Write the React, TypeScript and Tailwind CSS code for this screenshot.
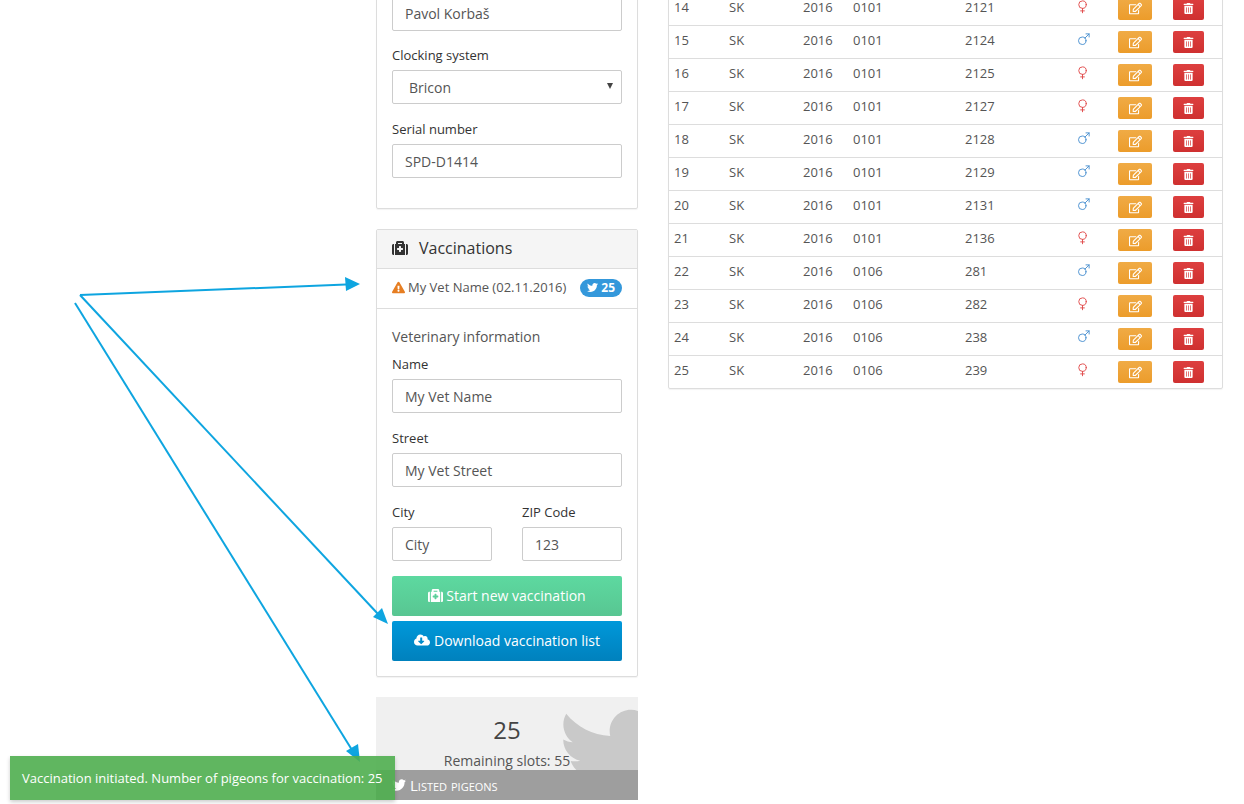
import React from 'react';
import { FaMedkit, FaTwitter, FaExclamationTriangle, FaCloudDownloadAlt, FaRegEdit, FaTrashAlt } from 'react-icons/fa';
import { Venus, Mars } from 'lucide-react';

type Row = [number, string, string, string, string, 'f' | 'm'];

const rows: Row[] = [
    [14, 'SK', '2016', '0101', '2121', 'f'],
    [15, 'SK', '2016', '0101', '2124', 'm'],
    [16, 'SK', '2016', '0101', '2125', 'f'],
    [17, 'SK', '2016', '0101', '2127', 'f'],
    [18, 'SK', '2016', '0101', '2128', 'm'],
    [19, 'SK', '2016', '0101', '2129', 'm'],
    [20, 'SK', '2016', '0101', '2131', 'm'],
    [21, 'SK', '2016', '0101', '2136', 'f'],
    [22, 'SK', '2016', '0106', '281', 'm'],
    [23, 'SK', '2016', '0106', '282', 'f'],
    [24, 'SK', '2016', '0106', '238', 'm'],
    [25, 'SK', '2016', '0106', '239', 'f'],
];

const Field = ({ label, value, className = '' }: { label: string; value: string; className?: string }) => (
    <div className={className}>
        <div className="text-[13px] leading-[18px] font-medium text-[#333] mb-[6px]">{label}</div>
        <div className="h-[34px] w-full border border-[#ccc] rounded-[2px] px-3 flex items-center text-[14px] text-[#555] bg-white">{value}</div>
    </div>
);

const Arrows = () => (
    <svg className="absolute left-0 top-0 pointer-events-none" width="1244" height="804">
        <g stroke="#0ea5e0" strokeWidth="2" fill="none">
            <line x1="80" y1="295" x2="346" y2="284.6" />
            <line x1="80" y1="295" x2="378" y2="614" />
            <line x1="75" y1="303" x2="352" y2="750" />
        </g>
        <g fill="#0ea5e0">
            <polygon points="360,284 345,277 346,291" />
            <polygon points="388,624 373,617 382,608" />
            <polygon points="360,762 346,751 358,744" />
        </g>
    </svg>
);

export default function App() {
    return (
        <div className="relative h-[804px] overflow-hidden bg-white font-['Open_Sans',sans-serif] text-[#555]">
            <div className="flex items-start pl-[376px] -mt-[4px] gap-[30px]">
                {/* Left column */}
                <div className="w-[262px] shrink-0 flex flex-col gap-5">
                    <div className="border border-[#ddd] rounded-b-[2px] px-[15px] pb-[30px] shadow-[0_1px_1px_rgba(0,0,0,0.05)]">
                        <div className="h-[34px] border border-[#ccc] rounded-[2px] px-3 pb-[1px] flex items-center text-[14px] text-[#555]">Pavol Korbaš</div>
                        <div className="mt-[15px] text-[13px] leading-[18px] font-medium text-[#333] mb-[6px]">Clocking system</div>
                        <div className="relative h-[34px] border border-[#ccc] rounded-[2px] pl-4 flex items-center text-[14px] text-[#555]">
                            Bricon
                            <span className="absolute right-[8px] top-[12px] w-0 h-0 border-x-[3px] border-x-transparent border-t-[6px] border-t-[#444]" />
                        </div>
                        <Field label="Serial number" value="SPD-D1414" className="mt-[16px]" />
                    </div>

                    <div className="border border-[#ddd] rounded-[2px] shadow-[0_1px_1px_rgba(0,0,0,0.05)]">
                        <div className="h-[39px] bg-[#f5f5f5] border-b border-[#ddd] px-[15px] pb-[2px] flex items-center text-[16px] text-[#333]">
                            <FaMedkit size={16} className="mr-[11px]" />
                            Vaccinations
                        </div>
                        <div className="h-[40px] border-b border-[#ddd] px-[15px] pb-[2px] flex items-center justify-between text-[13px] text-[#555]">
                            <span className="flex items-center gap-[3px]">
                                <FaExclamationTriangle size={13} className="text-[#e67e22]" />
                                My Vet Name (02.11.2016)
                            </span>
                            <span className="h-[18px] px-[7px] rounded-full bg-[#3498db] text-white text-[12px] font-bold flex items-center gap-[3px]">
                                <FaTwitter size={11} />
                                25
                            </span>
                        </div>
                        <div className="px-[15px] pt-[18px] pb-[15px]">
                            <div className="text-[14px] leading-[20px] text-[#555] mb-[8px]">Veterinary information</div>
                            <Field label="Name" value="My Vet Name" />
                            <Field label="Street" value="My Vet Street" className="mt-[16px]" />
                            <div className="flex justify-between mt-[16px]">
                                <Field label="City" value="City" className="w-[100px]" />
                                <Field label="ZIP Code" value="123" className="w-[100px]" />
                            </div>
                            <button className="mt-[15px] w-full h-[40px] pb-[2px] rounded-[2px] bg-gradient-to-b from-[#5dd9a0] to-[#58c692] text-white text-[14px] font-medium flex items-center justify-center gap-[3px]">
                                <FaMedkit size={15} />
                                Start new vaccination
                            </button>
                            <button className="mt-[5px] w-full h-[40px] pb-[2px] rounded-[2px] bg-gradient-to-b from-[#0098da] to-[#0081bd] text-white text-[14px] font-medium flex items-center justify-center gap-[4px]">
                                <FaCloudDownloadAlt size={16} />
                                Download vaccination list
                            </button>
                        </div>
                    </div>

                    <div className="relative h-[103px] bg-[#f0f0f0] overflow-hidden">
                        <FaTwitter size={104} className="absolute left-[183px] top-[3px] text-[#c9c9c9]" />
                        <div className="relative text-center pt-[17px] text-[24px] leading-[32px] text-[#444]">25</div>
                        <div className="relative text-center mt-[5px] text-[14px] leading-[20px] text-[#555]">Remaining slots: 55</div>
                        <div className="absolute left-0 right-0 bottom-0 h-[30px] bg-[#9e9e9e] text-white text-[15px] font-medium flex items-center gap-[4px] pl-[16px] [font-variant:small-caps]">
                            <FaTwitter size={14} />
                            Listed pigeons
                        </div>
                    </div>
                </div>

                {/* Pigeon table */}
                <div className="w-[555px] -mt-[5px] border border-[#ddd] rounded-b-[2px] shadow-[0_1px_1px_rgba(0,0,0,0.05)]">
                    <table className="w-full table-fixed text-[13px] text-[#555]">
                        <colgroup>
                            <col className="w-[60px]" />
                            <col className="w-[74px]" />
                            <col className="w-[50px]" />
                            <col className="w-[112px]" />
                            <col className="w-[100px]" />
                            <col className="w-[53px]" />
                            <col className="w-[55px]" />
                            <col />
                        </colgroup>
                        <tbody>
                            {rows.map((r, i) => (
                                <tr key={r[0]} className={`h-[33px] ${i < rows.length - 1 ? 'border-b border-[#ddd]' : ''}`}>
                                    <td className="pl-[5px] pb-[2px]">{r[0]}</td>
                                    <td className="pb-[2px]">{r[1]}</td>
                                    <td className="pb-[2px]">{r[2]}</td>
                                    <td className="pb-[2px]">{r[3]}</td>
                                    <td className="pb-[2px]">{r[4]}</td>
                                    <td>
                                        {r[5] === 'f'
                                            ? <Venus size={15} strokeWidth={1.5} className="text-[#e04b4b] ml-[10px] -mt-[4px]" />
                                            : <Mars size={15} strokeWidth={1.5} className="text-[#4a90d0] ml-[11px] -mt-[4px]" />}
                                    </td>
                                    <td>
                                        <span className="w-[34px] h-[22px] mt-[1px] rounded-[2px] bg-gradient-to-b from-[#f0ab45] to-[#ec9c2a] text-white flex items-center justify-center">
                                            <FaRegEdit size={13} />
                                        </span>
                                    </td>
                                    <td>
                                        <span className="w-[31px] h-[22px] mt-[1px] rounded-[2px] bg-gradient-to-b from-[#dd3f3f] to-[#cf3030] text-white flex items-center justify-center">
                                            <FaTrashAlt size={11} />
                                        </span>
                                    </td>
                                </tr>
                            ))}
                        </tbody>
                    </table>
                </div>
            </div>

            <Arrows />

            <div className="absolute left-[10px] top-[756px] w-[385px] h-[44px] bg-[#4fae4f]/90 shadow-[0_2px_4px_rgba(0,0,0,0.2)] flex items-center pl-[12px] pt-[2px] text-[13px] font-medium text-white whitespace-nowrap">
                Vaccination initiated. Number of pigeons for vaccination: 25
            </div>
        </div>
    );
}
